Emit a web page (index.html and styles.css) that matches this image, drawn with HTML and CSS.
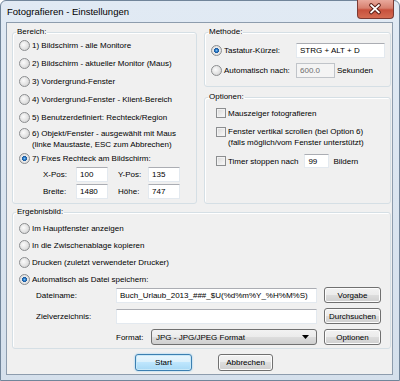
FILE: index.html
```html
<!DOCTYPE html>
<html lang="de">
<head>
  <meta charset="UTF-8" />
  <title>Fotografieren - Einstellungen</title>
  <link rel="stylesheet" href="styles.css">
</head>
<body>
  <div class="window">
    <div class="titlebar">
      <span class="title">Fotografieren - Einstellungen</span>
      <span class="close">
        <svg width="37" height="18" viewBox="0 0 37 18">
          <path d="M14.5 5 L22.5 12.5 M22.5 5 L14.5 12.5" stroke="#5a1e16" stroke-width="4" stroke-linecap="round"/>
          <path d="M14.5 5 L22.5 12.5 M22.5 5 L14.5 12.5" stroke="#ffffff" stroke-width="2" stroke-linecap="round"/>
        </svg>
      </span>
    </div>

    <div class="client">
      <div class="top">
        <fieldset class="group">
          <legend>Bereich:</legend>
          <div class="body bereich">
            <div class="opt first"><span class="radio"></span>1) Bildschirm - alle Monitore</div>
            <div class="opt"><span class="radio"></span>2) Bildschirm - aktueller Monitor (Maus)</div>
            <div class="opt"><span class="radio"></span>3) Vordergrund-Fenster</div>
            <div class="opt"><span class="radio"></span>4) Vordergrund-Fenster - Klient-Bereich</div>
            <div class="opt"><span class="radio"></span>5) Benutzerdefiniert: Rechteck/Region</div>
            <div class="opt two"><span class="radio"></span><span>6) Objekt/Fenster - ausgewählt mit Maus<br>(linke Maustaste, ESC zum Abbrechen)</span></div>
            <div class="opt r7"><span class="radio on"></span>7) Fixes Rechteck am Bildschirm:</div>
            <div class="coords">
              <span>X-Pos:</span><input class="field" type="text" value="100">
              <span>Y-Pos:</span><input class="field" type="text" value="135">
              <span>Breite:</span><input class="field" type="text" value="1480">
              <span>Höhe:</span><input class="field" type="text" value="747">
            </div>
          </div>
        </fieldset>

        <div class="rightcol">
          <fieldset class="group">
            <legend>Methode:</legend>
            <div class="body methode">
              <div class="mrow">
                <span class="mlabel"><span class="radio on"></span>Tastatur-Kürzel:</span>
                <input class="field hotkey" type="text" value="STRG + ALT + D">
              </div>
              <div class="mrow">
                <span class="mlabel"><span class="radio"></span>Automatisch nach:</span>
                <input class="field secs" type="text" value="600.0" disabled>
                <span class="unit">Sekunden</span>
              </div>
            </div>
          </fieldset>

          <fieldset class="group optionen">
            <legend>Optionen:</legend>
            <div class="body opts">
              <div class="copt"><span class="check"></span>Mauszeiger fotografieren</div>
              <div class="copt two"><span class="check"></span><span>Fenster vertikal scrollen (bei Option 6)<br>(falls möglich/vom Fenster unterstützt)</span></div>
              <div class="copt timer"><span class="check"></span>Timer stoppen nach <input class="field count" type="text" value="99"> Bildern</div>
            </div>
          </fieldset>
        </div>
      </div>

      <fieldset class="group ergebnis">
        <legend>Ergebnisbild:</legend>
        <div class="body result">
          <div class="opt short"><span class="radio"></span>Im Hauptfenster anzeigen</div>
          <div class="opt short"><span class="radio"></span>In die Zwischenablage kopieren</div>
          <div class="opt short"><span class="radio"></span>Drucken (zuletzt verwendeter Drucker)</div>
          <div class="opt short"><span class="radio on"></span>Automatisch als Datei speichern:</div>
          <div class="files">
            <span>Dateiname:</span>
            <input class="field" type="text" value="Buch_Urlaub_2013_###_$U(%d%m%Y_%H%M%S)">
            <button class="btn">Vorgabe</button>
            <span>Zielverzeichnis:</span>
            <input class="field" type="text" value="">
            <button class="btn">Durchsuchen</button>
            <span></span>
            <div class="format">
              <span class="flabel">Format:</span>
              <div class="select">JPG - JPG/JPEG Format
                <svg width="7" height="4" viewBox="0 0 7 4"><path d="M0 0 H7 L3.5 4 Z" fill="#000"/></svg>
              </div>
            </div>
            <button class="btn">Optionen</button>
          </div>
        </div>
      </fieldset>

      <div class="actions">
        <button class="btn default start">Start</button>
        <button class="btn cancel">Abbrechen</button>
      </div>
    </div>
  </div>
</body>
</html>
```

FILE: styles.css
```css
* {
  box-sizing: border-box;
}
body {
  margin: 0;
  background: #fff;
  font-family: 'Liberation Sans', Arial, sans-serif;
  font-size: 8px;
  color: #000;
}
.window {
  width: 400px;
  height: 381px;
  display: flex;
  flex-direction: column;
  background: linear-gradient(#e1eaf4, #d5e0ec);
  border: 1px solid #71859a;
  border-radius: 6px 6px 0 0;
}
.titlebar {
  height: 21px;
  display: flex;
  align-items: flex-start;
  padding: 0 5px 0 6px;
}
.title {
  margin-top: 5px;
  font-size: 9.5px;
  line-height: 12px;
}
.close {
  margin-left: auto;
  margin-top: -1px;
  width: 37px;
  height: 19px;
  border: 1px solid #7b3a33;
  border-top: none;
  border-radius: 0 0 4px 4px;
  background: linear-gradient(#e9a99c 0, #d7806f 45%, #c7503c 55%, #d46b52 100%);
  display: flex;
}
.close svg {
  margin-left: -1px;
}
.client {
  flex: 1;
  margin: 0 6px 5px 5px;
  border: 1px solid #8d9cad;
  background: #f0f0f0;
  padding: 4px 0 0 5px;
}
.top {
  display: grid;
  grid-template-columns: 185px 187px;
  column-gap: 7px;
}
.group {
  margin: 0;
  padding: 0;
  min-width: 0;
  border: 1px solid #d5dfe5;
  border-radius: 3px;
  box-shadow: inset 1px 1px 0 #fff;
}
legend {
  padding: 0 1px;
  margin-left: 3px;
  line-height: 10px;
  height: 10px;
}
.body {
  padding-left: 6px;
}
.radio {
  flex: none;
  width: 11px;
  height: 11px;
  margin-right: 2px;
  border-radius: 50%;
  border: 1px solid #8c8e90;
  background: radial-gradient(circle at 40% 40%, #fbfbfb 0, #e2e2e2 55%, #c9c9c9 100%);
}
.radio.on {
  background: radial-gradient(circle at 50% 50%, #7cc0f0 0, #2a78c4 22%, #1c5a9e 36%, #e9e9e9 44%, #d6d6d6 100%);
}
.check {
  flex: none;
  width: 10px;
  height: 10px;
  margin-right: 2px;
  border: 1px solid #8c8e90;
  background: linear-gradient(135deg, #d8d8d8, #fbfbfb);
  box-shadow: inset 0 0 0 1px #f2f2f2;
}
.opt {
  display: flex;
  align-items: center;
  height: 18px;
  white-space: nowrap;
}
.opt.first {
  margin-top: -1px;
}
.opt.two {
  height: 24px;
  align-items: flex-start;
  padding-top: 2px;
  line-height: 11px;
}
.opt.r7,
.opt.short {
  height: 17px;
}
.field {
  height: 15px;
  padding: 0 3px;
  font-family: inherit;
  font-size: 8px;
  color: #000;
  background: #fff;
  border: 1px solid #e3e9ef;
  border-top-color: #abadb3;
  border-radius: 0;
  outline: none;
  min-width: 0;
}
.field:disabled {
  background: #f4f4f4;
  color: #6d6d6d;
  border-color: #c0c4c9;
}
.coords {
  display: grid;
  grid-template-columns: 33px 42px 30px 32px;
  grid-auto-rows: 15px;
  row-gap: 2px;
  align-items: center;
  margin-left: 24px;
}
.coords .field {
  width: 32px;
}
.bereich {
  padding-bottom: 4px;
}
.rightcol {
  display: flex;
  flex-direction: column;
}
.methode {
  padding: 3px 0 6px 6px;
}
.mrow {
  display: flex;
  align-items: center;
  height: 20px;
}
.mlabel {
  display: flex;
  align-items: center;
  width: 85px;
}
.hotkey {
  width: 89px;
}
.secs {
  width: 39px;
}
.unit {
  margin-left: 2px;
}
.optionen {
  flex: 1;
  margin-top: 5px;
}
.opts {
  padding: 2px 0 0 11px;
}
.copt {
  display: flex;
  align-items: center;
  height: 18px;
  white-space: nowrap;
}
.copt.two {
  height: 28px;
  align-items: flex-start;
  padding-top: 4px;
  line-height: 11px;
}
.copt.two .check {
  margin-top: 1px;
}
.copt.timer {
  margin-top: 2px;
}
.count {
  width: 25px;
  height: 14px;
  margin: 0 4px 0 6px;
}
.ergebnis {
  width: 379px;
  margin-top: 3px;
}
.result {
  padding: 3px 0 3px 6px;
}
.files {
  display: grid;
  grid-template-columns: 73px 201px 57px;
  grid-auto-rows: 16px;
  column-gap: 7px;
  row-gap: 5px;
  align-items: center;
  margin: -1px 0 0 17px;
}
.files .field {
  height: 15px;
  width: 201px;
}
.format {
  display: flex;
  align-items: center;
  height: 16px;
}
.flabel {
  width: 35px;
}
.select {
  flex: 1;
  height: 16px;
  display: flex;
  align-items: center;
  justify-content: space-between;
  padding: 0 7px 0 4px;
  border: 1px solid #707070;
  border-radius: 3px;
  background: linear-gradient(#f2f2f2 0, #ebebeb 50%, #dddddd 50%, #cfcfcf 100%);
}
.btn {
  height: 16px;
  padding: 0;
  font-family: inherit;
  font-size: 8px;
  color: #000;
  border: 1px solid #707070;
  border-radius: 3px;
  background: linear-gradient(#f2f2f2 0, #ebebeb 50%, #dddddd 50%, #cfcfcf 100%);
  box-shadow: inset 0 0 0 1px #fcfcfc;
}
.actions {
  display: flex;
  gap: 26px;
  margin-top: 5px;
  padding-left: 123px;
}
.actions .btn {
  height: 17px;
}
.start {
  width: 57px;
}
.cancel {
  width: 55px;
}
.btn.default {
  border-color: #3c7fb1;
  background: linear-gradient(#eaf6fd 0, #d9f0fc 50%, #bee6fd 50%, #a7d9f5 100%);
  box-shadow: inset 0 0 0 1px #c8e8f8, 0 0 2px #7cc4f2;
}
```
